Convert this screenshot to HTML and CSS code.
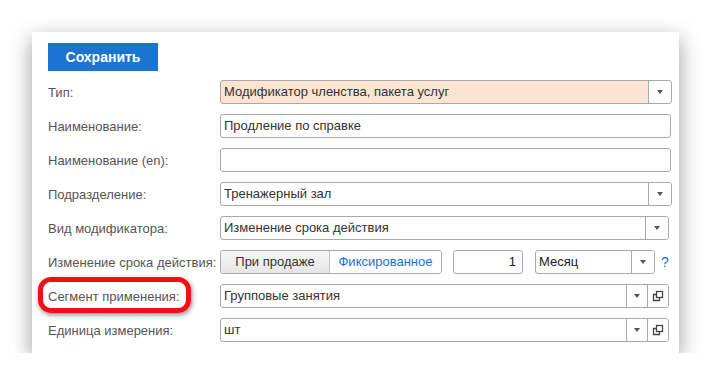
FILE: index.html
```html
<!DOCTYPE html>
<html lang="ru">
<head>
  <meta charset="UTF-8" />
  <title>Модификатор</title>
  <link rel="stylesheet" href="styles.css">
</head>
<body>

<div class="panel">
  <button class="save">Сохранить</button>

  <div class="form">
    <div class="row">
      <div class="label">Тип:</div>
      <div class="field select peach">
        <span class="value">Модификатор членства, пакета услуг</span>
        <span class="btn"><i class="arrow"></i></span>
      </div>
    </div>

    <div class="row">
      <div class="label">Наименование:</div>
      <div class="field end-1">
        <span class="value">Продление по справке</span>
      </div>
    </div>

    <div class="row">
      <div class="label">Наименование (en):</div>
      <div class="field end-1">
        <span class="value"></span>
      </div>
    </div>

    <div class="row">
      <div class="label">Подразделение:</div>
      <div class="field select">
        <span class="value">Тренажерный зал</span>
        <span class="btn"><i class="arrow"></i></span>
      </div>
    </div>

    <div class="row">
      <div class="label">Вид модификатора:</div>
      <div class="field select end-3">
        <span class="value">Изменение срока действия</span>
        <span class="btn"><i class="arrow"></i></span>
      </div>
    </div>

    <div class="row">
      <div class="label">Изменение срока действия:</div>
      <div class="toggle">
        <span class="opt active">При продаже</span>
        <span class="opt link">Фиксированное</span>
      </div>
      <div class="field number">
        <span class="value">1</span>
      </div>
      <div class="field select period">
        <span class="value dark">Месяц</span>
        <span class="btn"><i class="arrow"></i></span>
      </div>
      <span class="help">?</span>
    </div>

    <div class="row">
      <div class="label">Сегмент применения:</div>
      <div class="field select end-3">
        <span class="value">Групповые занятия</span>
        <span class="btn small"><i class="arrow"></i></span>
        <span class="btn small">
          <svg width="12" height="12" viewBox="0 0 12 12">
            <rect x="4.5" y="1.5" width="6" height="6" fill="none" stroke="#444" stroke-width="1.3"/>
            <path d="M4.5 4.5 H1.5 V10.5 H7.5 V7.5" fill="none" stroke="#444" stroke-width="1.3"/>
          </svg>
        </span>
      </div>
      <div class="marker"></div>
    </div>

    <div class="row">
      <div class="label">Единица измерения:</div>
      <div class="field select end-3">
        <span class="value">шт</span>
        <span class="btn small"><i class="arrow"></i></span>
        <span class="btn small">
          <svg width="12" height="12" viewBox="0 0 12 12">
            <rect x="4.5" y="1.5" width="6" height="6" fill="none" stroke="#444" stroke-width="1.3"/>
            <path d="M4.5 4.5 H1.5 V10.5 H7.5 V7.5" fill="none" stroke="#444" stroke-width="1.3"/>
          </svg>
        </span>
      </div>
    </div>
  </div>
</div>

</body>
</html>
```

FILE: styles.css
```css
body {
  margin: 0;
  background: #fff;
  font-family: "Liberation Sans", Arial, sans-serif;
  font-size: 13px;
  color: #333;
}

.panel {
  margin: 32px 0 0 32px;
  width: 647px;
  height: 321px;
  box-sizing: border-box;
  padding: 11px 7px 0 16px;
  background: #fff;
  box-shadow: 0 7px 20px rgba(0, 0, 0, 0.4);
}

.save {
  display: block;
  width: 110px;
  height: 28px;
  border: none;
  background: #1b74cf;
  color: #fff;
  font-family: inherit;
  font-size: 14px;
  font-weight: bold;
  padding: 0;
  margin: 0 0 9px 0;
}

.form {
  display: flex;
  flex-direction: column;
  gap: 10px;
}

.row {
  position: relative;
  display: flex;
  align-items: center;
  height: 24px;
}

.label {
  width: 172px;
  flex: none;
  color: #555;
  white-space: nowrap;
}

.field {
  flex: 1;
  display: flex;
  height: 24px;
  box-sizing: border-box;
  border: 1px solid #a9a9a9;
  border-radius: 3px;
  background: #fff;
  overflow: hidden;
}

.field.end-1 {
  margin-right: 1px;
}

.field.end-3 {
  margin-right: 3px;
}

.field.peach {
  background: #fde4d2;
}

.value {
  flex: 1;
  padding: 0 4px 0 3px;
  line-height: 22px;
  color: #333;
  white-space: nowrap;
}

.value.dark {
  color: #222;
}

.btn {
  width: 22px;
  flex: none;
  border-left: 1px solid #a9a9a9;
  background: #fff;
  display: flex;
  align-items: center;
  justify-content: center;
}

.btn.small {
  width: 20px;
}

.arrow {
  width: 0;
  height: 0;
  border-left: 3px solid transparent;
  border-right: 3px solid transparent;
  border-top: 4px solid #555;
}

.toggle {
  display: flex;
  width: 222px;
  height: 24px;
  box-sizing: border-box;
  border: 1px solid #a9a9a9;
  border-radius: 3px;
  overflow: hidden;
  flex: none;
}

.opt {
  display: flex;
  align-items: center;
  justify-content: center;
  line-height: 22px;
}

.opt.active {
  width: 108px;
  background: linear-gradient(#f6f6f6, #e6e6e6);
  border-right: 1px solid #c4c4c4;
  color: #333;
}

.opt.link {
  flex: 1;
  background: #fff;
  color: #1c6fd0;
}

.field.number {
  flex: none;
  width: 70px;
  margin-left: 11px;
}

.field.number .value {
  text-align: right;
  padding-right: 6px;
  color: #222;
}

.field.period {
  flex: none;
  width: 120px;
  margin-left: 12px;
}

.help {
  margin-left: 6px;
  color: #1c6fd0;
  font-size: 14px;
}

.marker {
  position: absolute;
  left: -10px;
  top: -7px;
  width: 153px;
  height: 36px;
  box-sizing: border-box;
  border: 5px solid #f01018;
  border-radius: 13px;
  box-shadow: 1px 2px 5px rgba(0, 0, 0, 0.45);
}
```
